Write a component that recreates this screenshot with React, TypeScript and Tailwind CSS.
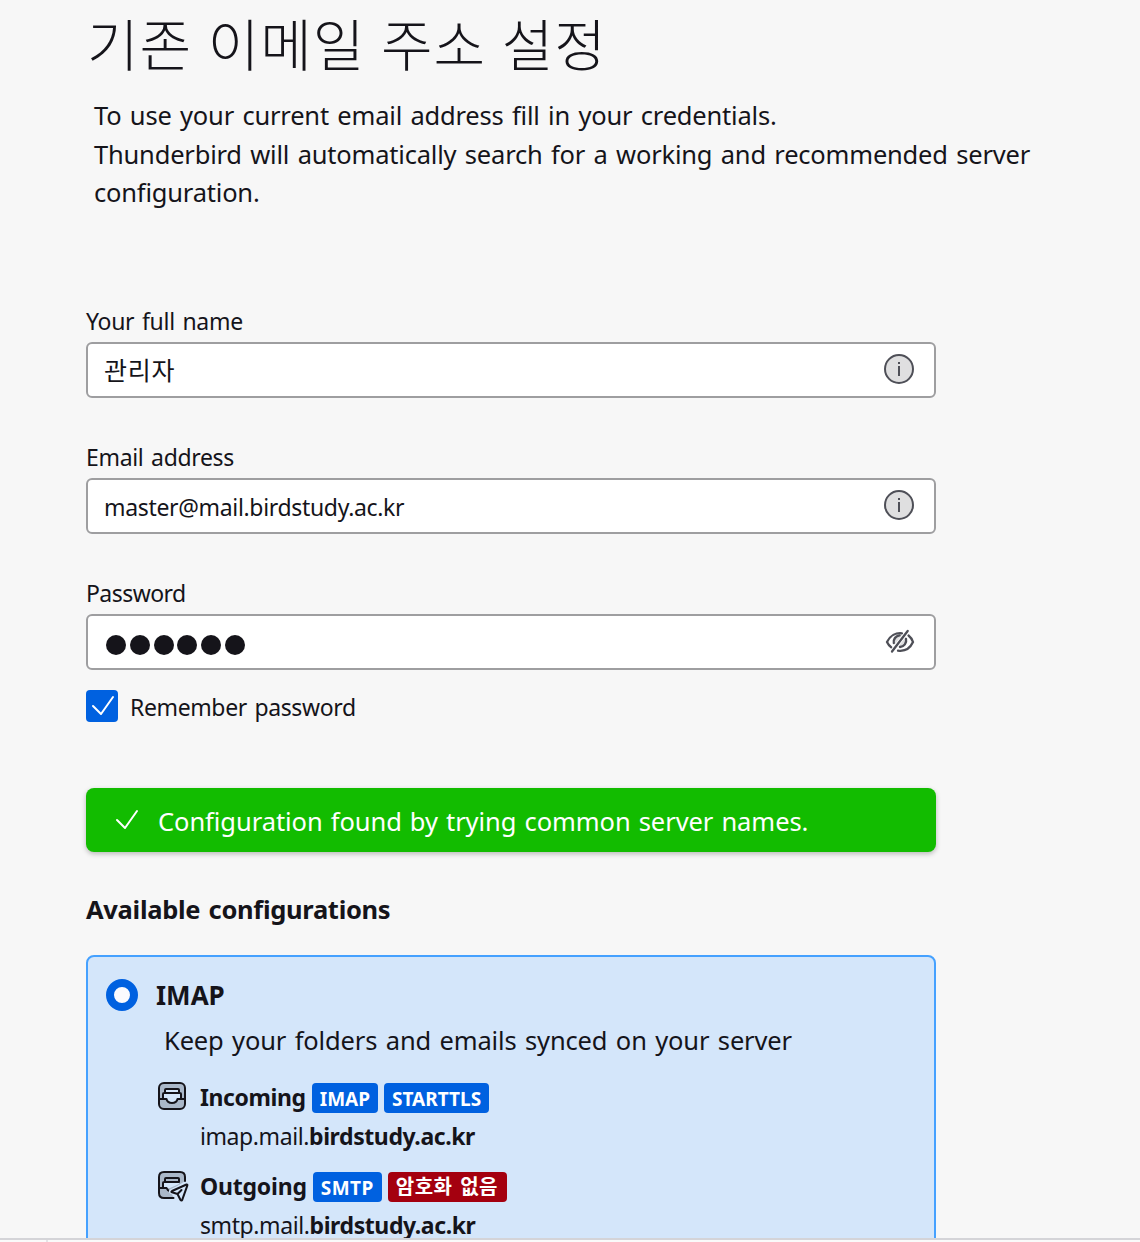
import type { ReactNode } from 'react';

function InfoIcon() {
  return (
    <svg width="32" height="32" viewBox="0 0 32 32" className="mb-0.5 shrink-0">
      <circle cx="16" cy="16" r="14" fill="#dfdfe0" stroke="#4e4f57" strokeWidth="2" />
      <path d="M16 13v10M15 10h2" stroke="#4e4f57" strokeWidth="2" fill="none" />
    </svg>
  );
}

function HiddenEyeIcon() {
  return (
    <svg width="32" height="32" viewBox="0 0 32 32" fill="none" stroke="#4e4f57" strokeWidth="2.3" strokeLinecap="round" className="-mr-px mb-0.5 shrink-0">
      <circle cx="16" cy="15.500" r="7" fill="#dfdfe0" stroke="none" />
      <path d="M3 17C6 10.500 12 7.500 18 8.300M3 17c1 2.200 2.500 4 4.300 5.400M24.500 10.500c1.900 1.500 3.500 3.500 4.500 6.500-3 6.500-8.500 9.500-15 8.600" />
      <path d="M9.800 18c-.8-3.500 2-7.400 5.800-7.700M22 13.800c1 4-2 8-6 8.200" />
      <path d="M23.700 6L8 26.500" stroke="#fff" strokeWidth="4" />
      <path d="M23.700 6L8 26.500" />
    </svg>
  );
}

function InboxIcon() {
  return (
    <svg width="32" height="32" viewBox="0 0 32 32" fill="none" stroke="#15141a" strokeWidth="2" strokeLinejoin="round" className="mb-0.5 shrink-0">
      <rect x="3" y="3" width="26" height="26" rx="5" fill="#aab8c9" />
      <path d="M7 19v-5.500l2-.500 1-4h12l1 4 2 .500V19h-3.500c-1 6-10 6-11 0z" fill="#d4e6fa" stroke="none" />
      <path d="M3 19h7.500c1 5.300 10 5.300 11 0H29M7 19v-5q0-1 1-1h16q1 0 1 1v5M9 13v-3q0-1 1-1h12q1 0 1 1v3" />
    </svg>
  );
}

function OutboxIcon() {
  return (
    <svg width="32" height="32" viewBox="0 0 32 32" fill="none" stroke="#15141a" strokeWidth="2" strokeLinejoin="round" strokeLinecap="round" className="mb-0.5 shrink-0 overflow-visible">
      <path d="M8 3h16q5 0 5 5v4L14 22l4 7H8q-5 0-5-5V8q0-5 5-5z" fill="#aab8c9" stroke="none" />
      <path d="M7 19v-6h16v2l-9 4z" fill="#d4e6fa" stroke="none" />
      <path d="M29 12V8q0-5-5-5H8Q3 3 3 8v16q0 5 5 5h9.500M3 19h7.500M7 19v-5q0-1 1-1h14M9 13v-3q0-1 1-1h12q1 0 1 1v3M10.500 19q1 2.500 3 3" />
      <path d="M30.500 15.500L15.500 22.500l6 2.500 4.500 6z" fill="#d4e6fa" stroke="#d4e6fa" strokeWidth="5" />
      <path d="M30.500 15.500L16 22q-1.300.800 0 1.300l5.500 1.700 3 6q1 1.300 1.800-.300l5-14q.300-1.500-.800-1.200zM21.500 25l4-4" fill="#d4e6fa" />
    </svg>
  );
}

function CheckIcon() {
  return (
    <svg width="32" height="32" viewBox="0 0 32 32" fill="none" stroke="white" strokeWidth="2" strokeLinecap="round" strokeLinejoin="round">
      <path d="M7 16l8 8L27 7" />
    </svg>
  );
}

function Field({ label, labelClass, children, icon }: { label: string; labelClass: string; children: ReactNode; icon: ReactNode }) {
  return (
    <label className="mb-[41px] block">
      <span className={`block h-9 w-fit text-[23px] leading-9 [word-spacing:2px] ${labelClass}`}>{label}</span>
      <span className="mt-[3px] flex h-14 w-[850px] items-center justify-between rounded-md border-2 border-[#9e9ea0] bg-white pr-[19px] pl-4">
        {children}
        {icon}
      </span>
    </label>
  );
}

function Badge({ children, className }: { children: ReactNode; className: string }) {
  return (
    <span className={`flex h-[30px] items-center rounded-sm pt-0.5 leading-7 font-bold whitespace-nowrap text-white ${className}`}>
      {children}
    </span>
  );
}

function ServerRow({ icon, name, nameClass, badges, prefix }: { icon: ReactNode; name: string; nameClass: string; badges: ReactNode; prefix: string }) {
  return (
    <div className="ml-[50px] h-[89px] pt-5">
      <div className="flex h-8 items-center">
        {icon}
        <b className={`ml-3 text-[23px] leading-8 whitespace-nowrap ${nameClass}`}>{name}</b>
        <span className="ml-1.5 flex gap-1.5 pt-0.5">{badges}</span>
      </div>
      <p className="mt-[3px] ml-11 text-[23px] leading-10 tracking-[-0.41px]">
        {prefix}.mail.<b>birdstudy.ac.kr</b>
      </p>
    </div>
  );
}

export default function App() {
  return (
    <div className="h-[1242px] overflow-hidden bg-[#fafafa] font-['Noto_Sans','Noto_Sans_CJK_KR',sans-serif] text-[#15141a]">
      <main className="h-[1238px] overflow-hidden bg-[#f7f7f7] pl-[86px]">
        <h1 className="h-24 w-fit pl-px font-['Noto_Sans_CJK_KR',sans-serif] text-[56px] leading-[84px] font-light tracking-[0.9px] whitespace-nowrap [word-spacing:2.7px]">기존 이메일 주소 설정</h1>
        <p className="h-[207px] pl-2 text-[25.5px] leading-[38.5px] tracking-[-0.2px] whitespace-nowrap [word-spacing:2px]">
          To use your current email address fill in your credentials.<br />
          Thunderbird will automatically search for a working and recommended server<br />
          configuration.
        </p>
        <Field label="Your full name" labelClass="tracking-[-0.3px]" icon={<InfoIcon />}>
          <span className="pt-0.5 text-[25px] tracking-[0.7px]">관리자</span>
        </Field>
        <Field label="Email address" labelClass="tracking-[-0.33px]" icon={<InfoIcon />}>
          <span className="pt-0.5 text-[23px] tracking-[-0.33px]">master@mail.birdstudy.ac.kr</span>
        </Field>
        <Field label="Password" labelClass="tracking-[-0.55px]" icon={<HiddenEyeIcon />}>
          <span className="flex gap-[3.8px] pt-1.5 pl-[2px]">
            {[0, 1, 2, 3, 4, 5].map((i) => <i key={i} className="size-5 rounded-full bg-[#15141a]" />)}
          </span>
        </Field>
        <label className="-mt-[21px] flex h-8 items-center gap-3">
          <span className="flex size-8 items-center justify-center rounded-sm bg-[#0061e0]">
            <CheckIcon />
          </span>
          <span className="pt-[3px] text-[23px] tracking-[-0.38px] [word-spacing:2px]">Remember password</span>
        </label>
        <div className="mt-[66px] flex h-16 w-[850px] items-center rounded-lg bg-[#12bc00] pl-6 text-white shadow-[0_2px_5px_rgba(0,0,0,0.25)]">
          <CheckIcon />
          <span className="ml-4 pt-[3px] text-[25.5px] tracking-[-0.06px] [word-spacing:1.5px]">Configuration found by trying common server names.</span>
        </div>
        <h2 className="mt-[39px] h-9 w-fit text-[25.5px] leading-9 font-bold tracking-[-0.3px] [word-spacing:2px]">Available configurations</h2>
        <section className="mt-7 h-[400px] w-[850px] rounded-lg border-2 border-[#45a1ff] bg-[#d4e6fa] pt-[22px] pl-[18px]">
          <div className="flex h-8 items-center gap-[18px]">
            <span className="size-8 rounded-full border-8 border-[#0061e0] bg-[#fbfbfe]" />
            <h3 className="text-[26px] leading-8 font-bold">IMAP</h3>
          </div>
          <p className="mt-[9px] mb-px ml-[58px] h-10 w-fit text-[25.5px] leading-10 tracking-[-0.15px] [word-spacing:2px]">Keep your folders and emails synced on your server</p>
          <ServerRow
            icon={<InboxIcon />}
            name="Incoming"
            nameClass="tracking-[-0.4px]"
            prefix="imap"
            badges={
              <>
                <Badge className="bg-[#0061e0] px-2 text-[19px]">IMAP</Badge>
                <Badge className="bg-[#0061e0] px-2 text-[19px]">STARTTLS</Badge>
              </>
            }
          />
          <ServerRow
            icon={<OutboxIcon />}
            name="Outgoing"
            nameClass="tracking-[-0.2px]"
            prefix="smtp"
            badges={
              <>
                <Badge className="bg-[#0061e0] px-2 text-[19px] tracking-[0.45px]">SMTP</Badge>
                <Badge className="w-[119px] bg-[#a4000f] pb-0.5 pl-2 text-[20px] tracking-[0.5px] [word-spacing:2px]">암호화 없음</Badge>
              </>
            }
          />
        </section>
      </main>
      <div className="h-0.5 bg-[#d4d4d8]" />
      <div className="ml-[46px] h-0.5 w-0.5 bg-[#e4e4e7]" />
    </div>
  );
}
